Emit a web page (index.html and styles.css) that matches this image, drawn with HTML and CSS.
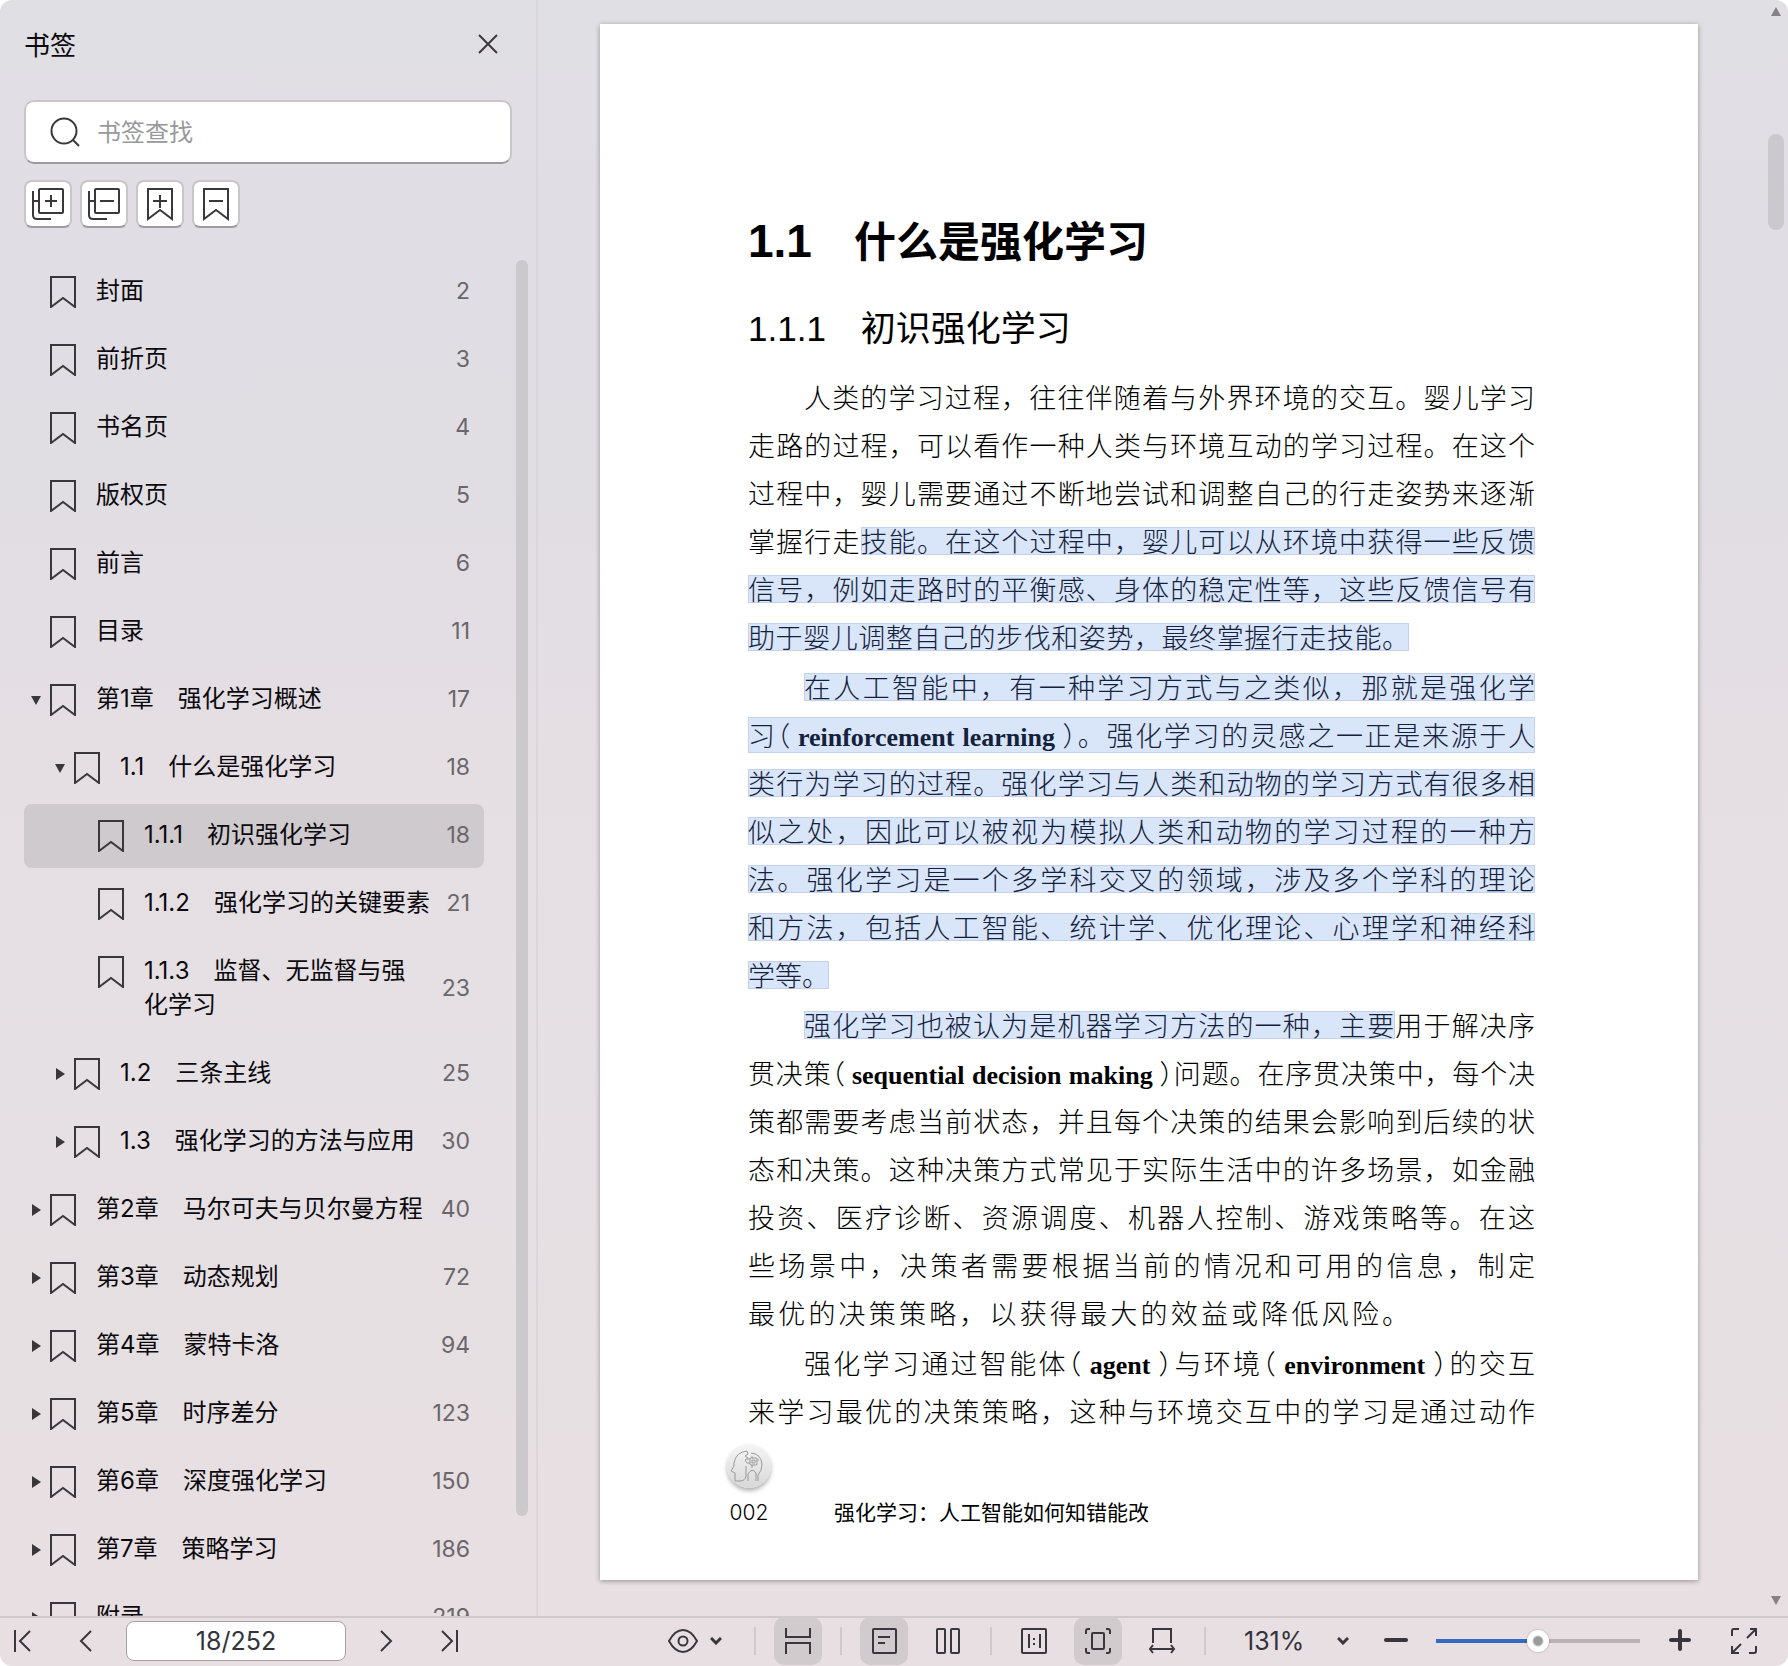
FILE: index.html
```html
<!DOCTYPE html>
<html lang="zh-CN">
<head>
  <meta charset="UTF-8">
  <meta name="viewport" content="width=device-width, initial-scale=1.0">
  <title>强化学习：人工智能如何知错能改</title>
  <link rel="stylesheet" href="styles.css">
</head>
<body>
  <!-- 公用图标 -->
  <svg class="defs" aria-hidden="true">
    <symbol id="i-mark" viewBox="0 0 26 32"><path d="M1 1H25V31L13 22L1 31Z"/></symbol>
    <symbol id="i-open" viewBox="0 0 12 12"><path d="M1 2H11L6 11Z"/></symbol>
    <symbol id="i-fold" viewBox="0 0 12 12"><path d="M2 0V12L11 6Z"/></symbol>
    <symbol id="i-chevron" viewBox="0 0 12 8"><path d="M1 1L6 6L11 1"/></symbol>
  </svg>

  <div class="app">
    <div class="main">
      <!-- 书签侧栏 -->
      <aside class="sidebar">
        <header class="sidebar-head">
          <h2>书签</h2>
          <button class="close-btn" aria-label="关闭">
            <svg width="20" height="20" viewBox="0 0 20 20"><path d="M1 1L19 19M19 1L1 19"/></svg>
          </button>
        </header>
        <label class="search">
          <svg width="32" height="32" viewBox="0 0 32 32"><circle cx="15" cy="15" r="12.500"/><path d="M24 24L30 30"/></svg>
          <input type="text" placeholder="书签查找" aria-label="书签查找">
        </label>
        <div class="mark-tools">
          <button aria-label="全部展开"><svg width="34" height="34" viewBox="0 0 34 34"><rect x="8" y="2" width="24" height="24" rx="1"/><path d="M20 8V20M14 14H26M2 4V28Q2 32 6 32H20M2 14H8"/></svg></button>
          <button aria-label="全部折叠"><svg width="34" height="34" viewBox="0 0 34 34"><rect x="8" y="2" width="24" height="24" rx="1"/><path d="M13 14H27M2 4V28Q2 32 6 32H20M2 14H8"/></svg></button>
          <button aria-label="添加书签"><svg width="34" height="34" viewBox="0 0 34 34"><path d="M5 2H29V32L17 23L5 32ZM17 8V21M10 14H24"/></svg></button>
          <button aria-label="删除书签"><svg width="34" height="34" viewBox="0 0 34 34"><path d="M5 2H29V32L17 23L5 32ZM10 14H24"/></svg></button>
        </div>
        <div class="tree-wrap">
          <nav class="tree">
            <a href="#"><i></i><svg class="mark"><use href="#i-mark"/></svg><span class="label">封面</span><span class="page-no">2</span></a>
            <a href="#"><i></i><svg class="mark"><use href="#i-mark"/></svg><span class="label">前折页</span><span class="page-no">3</span></a>
            <a href="#"><i></i><svg class="mark"><use href="#i-mark"/></svg><span class="label">书名页</span><span class="page-no">4</span></a>
            <a href="#"><i></i><svg class="mark"><use href="#i-mark"/></svg><span class="label">版权页</span><span class="page-no">5</span></a>
            <a href="#"><i></i><svg class="mark"><use href="#i-mark"/></svg><span class="label">前言</span><span class="page-no">6</span></a>
            <a href="#"><i></i><svg class="mark"><use href="#i-mark"/></svg><span class="label">目录</span><span class="page-no">11</span></a>
            <a href="#"><i><svg><use href="#i-open"/></svg></i><svg class="mark"><use href="#i-mark"/></svg><span class="label">第1章　强化学习概述</span><span class="page-no">17</span></a>
            <a href="#" class="level-2"><i><svg><use href="#i-open"/></svg></i><svg class="mark"><use href="#i-mark"/></svg><span class="label">1.1　什么是强化学习</span><span class="page-no">18</span></a>
            <a href="#" class="level-3 active"><i></i><svg class="mark"><use href="#i-mark"/></svg><span class="label">1.1.1　初识强化学习</span><span class="page-no">18</span></a>
            <a href="#" class="level-3"><i></i><svg class="mark"><use href="#i-mark"/></svg><span class="label">1.1.2　强化学习的关键要素</span><span class="page-no">21</span></a>
            <a href="#" class="level-3"><i></i><svg class="mark"><use href="#i-mark"/></svg><span class="label">1.1.3　监督、无监督与强<br>化学习</span><span class="page-no">23</span></a>
            <a href="#" class="level-2"><i><svg><use href="#i-fold"/></svg></i><svg class="mark"><use href="#i-mark"/></svg><span class="label">1.2　三条主线</span><span class="page-no">25</span></a>
            <a href="#" class="level-2"><i><svg><use href="#i-fold"/></svg></i><svg class="mark"><use href="#i-mark"/></svg><span class="label">1.3　强化学习的方法与应用</span><span class="page-no">30</span></a>
            <a href="#"><i><svg><use href="#i-fold"/></svg></i><svg class="mark"><use href="#i-mark"/></svg><span class="label">第2章　马尔可夫与贝尔曼方程</span><span class="page-no">40</span></a>
            <a href="#"><i><svg><use href="#i-fold"/></svg></i><svg class="mark"><use href="#i-mark"/></svg><span class="label">第3章　动态规划</span><span class="page-no">72</span></a>
            <a href="#"><i><svg><use href="#i-fold"/></svg></i><svg class="mark"><use href="#i-mark"/></svg><span class="label">第4章　蒙特卡洛</span><span class="page-no">94</span></a>
            <a href="#"><i><svg><use href="#i-fold"/></svg></i><svg class="mark"><use href="#i-mark"/></svg><span class="label">第5章　时序差分</span><span class="page-no">123</span></a>
            <a href="#"><i><svg><use href="#i-fold"/></svg></i><svg class="mark"><use href="#i-mark"/></svg><span class="label">第6章　深度强化学习</span><span class="page-no">150</span></a>
            <a href="#"><i><svg><use href="#i-fold"/></svg></i><svg class="mark"><use href="#i-mark"/></svg><span class="label">第7章　策略学习</span><span class="page-no">186</span></a>
            <a href="#"><i><svg><use href="#i-fold"/></svg></i><svg class="mark"><use href="#i-mark"/></svg><span class="label">附录</span><span class="page-no">219</span></a>
          </nav>
          <div class="tree-scroll"></div>
        </div>
      </aside>

      <!-- 文档阅读区 -->
      <main class="viewer">
        <article class="page">
          <h1><span class="num">1.1</span>　什么是强化学习</h1>
          <h2>1.1.1　初识强化学习</h2>
          <div class="text">
            <p>
              <span class="indent">人类的学习过程，往往伴随着与外界环境的交互。婴儿学习</span>
              <span>走路的过程，可以看作一种人类与环境互动的学习过程。在这个</span>
              <span>过程中，婴儿需要通过不断地尝试和调整自己的行走姿势来逐渐</span>
              <span>掌握行走<mark>技能。在这个过程中，婴儿可以从环境中获得一些反馈</mark></span>
              <span><mark>信号，例如走路时的平衡感、身体的稳定性等，这些反馈信号有</mark></span>
              <span class="short"><mark>助于婴儿调整自己的步伐和姿势，最终掌握行走技能。</mark></span>
            </p>
            <p>
              <span class="indent"><mark>在人工智能中，有一种学习方式与之类似，那就是强化学</mark></span>
              <span><mark class="tall">习<q>（</q><em>reinforcement learning</em><q>）</q>。强化学习的灵感之一正是来源于人</mark></span>
              <span><mark>类行为学习的过程。强化学习与人类和动物的学习方式有很多相</mark></span>
              <span><mark>似之处，因此可以被视为模拟人类和动物的学习过程的一种方</mark></span>
              <span><mark>法。强化学习是一个多学科交叉的领域，涉及多个学科的理论</mark></span>
              <span><mark>和方法，包括人工智能、统计学、优化理论、心理学和神经科</mark></span>
              <span class="last"><mark>学等。</mark></span>
            </p>
            <p>
              <span class="indent"><mark>强化学习也被认为是机器学习方法的一种，主要</mark>用于解决序</span>
              <span>贯决策<q>（</q><em>sequential decision making</em><q>）</q>问题。在序贯决策中，每个决</span>
              <span>策都需要考虑当前状态，并且每个决策的结果会影响到后续的状</span>
              <span>态和决策。这种决策方式常见于实际生活中的许多场景，如金融</span>
              <span>投资、医疗诊断、资源调度、机器人控制、游戏策略等。在这</span>
              <span>些场景中，决策者需要根据当前的情况和可用的信息，制定</span>
              <span class="short">最优的决策策略，以获得最大的效益或降低风险。</span>
            </p>
            <p>
              <span class="indent">强化学习通过智能体<q>（</q><em>agent</em><q>）</q>与环境<q>（</q><em>environment</em><q>）</q>的交互</span>
              <span>来学习最优的决策策略，这种与环境交互中的学习是通过动作</span>
            </p>
          </div>
          <footer class="page-foot">
            <div class="folio">
              <svg class="head-logo" width="44" height="44" viewBox="0 0 44 44">
                <path d="M8 37V29L4 27L7 22V19Q9 8 20 7L21 10L18 12L21 14L18 16L20 19M8 37H13Q18 37 19 32V22M24 9Q34 10 35 20Q35 27 31 31V37M21 37V30Q25 23 29 29V37"/>
                <rect x="23" y="14" width="7" height="7" rx="1"/><path d="M25 16H28V19H25ZM20 15H23M20 19H23M30 16H32M25 14V12M25 21V24"/>
              </svg>
              <span>002</span>
            </div>
            <span class="book-name">强化学习：人工智能如何知错能改</span>
          </footer>
        </article>
        <div class="view-scroll">
          <svg><use href="#i-open"/></svg>
          <div class="thumb"></div>
          <svg><use href="#i-open"/></svg>
        </div>
      </main>
    </div>

    <!-- 底部工具栏 -->
    <footer class="toolbar">
      <div class="pager">
        <button aria-label="首页"><svg width="20" height="24" viewBox="0 0 20 24"><path d="M3 1V23M18 2L8 12L18 22"/></svg></button>
        <button aria-label="上一页"><svg width="20" height="24" viewBox="0 0 20 24"><path d="M15 2L5 12L15 22"/></svg></button>
        <input type="text" value="18/252" aria-label="页码">
        <button aria-label="下一页"><svg width="20" height="24" viewBox="0 0 20 24"><path d="M5 2L15 12L5 22"/></svg></button>
        <button aria-label="末页"><svg width="20" height="24" viewBox="0 0 20 24"><path d="M2 2L12 12L2 22M17 1V23"/></svg></button>
      </div>
      <div class="view-tools">
        <button class="eye" aria-label="护眼模式">
          <svg width="30" height="24" viewBox="0 0 30 24"><path d="M1 12Q7 1 15 1Q23 1 29 12Q23 23 15 23Q7 23 1 12Z"/><circle cx="15" cy="12" r="4.500"/></svg>
          <svg class="chevron"><use href="#i-chevron"/></svg>
        </button>
        <span class="sep"></span>
        <button class="on" aria-label="连续阅读"><svg width="28" height="28" viewBox="0 0 28 28"><path d="M2 1V10H26V1M2 27V16H26V27"/></svg></button>
        <span class="sep"></span>
        <button class="on" aria-label="单页"><svg width="28" height="28" viewBox="0 0 28 28"><rect x="3" y="2" width="23" height="24" rx="1"/><path d="M8 10H20M8 16H15"/></svg></button>
        <button class="gap" aria-label="双页"><svg width="28" height="28" viewBox="0 0 28 28"><rect x="3" y="2" width="8" height="24" rx="1"/><rect x="17" y="2" width="8" height="24" rx="1"/></svg></button>
        <span class="sep"></span>
        <button aria-label="实际大小"><svg width="28" height="28" viewBox="0 0 28 28"><rect x="2" y="2" width="24" height="24" rx="1"/><path d="M9 7V21M20 7V21M14 11V13M14 16V18"/></svg></button>
        <button class="on gap" aria-label="适合页面"><svg width="28" height="28" viewBox="0 0 28 28"><rect x="8" y="6" width="12" height="16" rx="1"/><path d="M2 7V4Q2 2 4 2H6M22 2H24Q26 2 26 4V7M26 21V24Q26 26 24 26H22M6 26H4Q2 26 2 24V21"/></svg></button>
        <button class="gap" aria-label="适合宽度"><svg width="28" height="28" viewBox="0 0 28 28"><path d="M5 16V2H23V16M2 22H26M5 18L2 22L5 26M23 18L26 22L23 26"/></svg></button>
        <span class="sep"></span>
        <label class="zoom">
          <select aria-label="缩放比例"><option>131%</option></select>
          <svg class="chevron"><use href="#i-chevron"/></svg>
        </label>
        <button class="bold" aria-label="缩小"><svg width="26" height="26" viewBox="0 0 26 26"><path d="M3 12H23"/></svg></button>
        <input class="slider" type="range" min="0" max="100" value="50" aria-label="缩放">
        <button class="bold" aria-label="放大"><svg width="26" height="26" viewBox="0 0 26 26"><path d="M4 12H22M13 3V21"/></svg></button>
        <button class="full gap" aria-label="全屏"><svg width="28" height="28" viewBox="0 0 28 28"><path d="M2 9V4Q2 2 4 2H9M20 2H26V9M26 2L17 11M26 19V24Q26 26 24 26H19M9 26H2V19M2 26L11 17"/></svg></button>
      </div>
    </footer>
  </div>
</body>
</html>
```

FILE: styles.css
```css
* {
  box-sizing: border-box;
}
body {
  margin: 0;
  background: #fff;
  color: #0c0a0e;
  font-family: Inter, "Noto Sans CJK SC", sans-serif;
}
svg {
  display: block;
  flex: none;
  fill: none;
  stroke: #3a373c;
  stroke-width: 2;
}
.defs {
  position: absolute;
  width: 0;
  height: 0;
}
button {
  padding: 0;
  border: none;
  background: none;
  display: flex;
  align-items: center;
  justify-content: center;
}
.app {
  display: flex;
  flex-direction: column;
  height: 100vh;
  border-radius: 12px;
  overflow: hidden;
  background: linear-gradient(#e0dfe4, #e0dde3 28%, #e5dfe4 45%, #e5e0e4 65%, #e7dfe1 90%);
}
.main {
  flex: 1;
  min-height: 0;
  display: flex;
}

/* 侧栏 */
.sidebar {
  width: 538px;
  flex: none;
  display: flex;
  flex-direction: column;
  border-right: 2px solid #dad6db;
}
.sidebar-head {
  display: flex;
  align-items: center;
  justify-content: space-between;
  height: 87px;
  padding: 0 38px 0 24px;
}
.sidebar-head h2 {
  margin: 0;
  font-size: 26px;
  font-weight: 400;
}
.search {
  display: flex;
  align-items: center;
  height: 64px;
  margin: 13px 24px 16px;
  padding: 0 23px;
  background: #fff;
  border: 2px solid #c8c6cb;
  border-bottom-color: #9c9a9e;
  border-radius: 10px;
}
.search input {
  flex: 1;
  min-width: 0;
  margin-left: 16px;
  padding: 0;
  border: none;
  background: none;
  font: inherit;
  font-size: 24px;
}
.search input::placeholder {
  color: #9a989b;
}
.mark-tools {
  display: flex;
  gap: 8px;
  padding-left: 24px;
}
.mark-tools button {
  width: 48px;
  height: 48px;
  background: #fff;
  border: 2px solid #c8c6cb;
  border-bottom-color: #9c9a9e;
  border-radius: 8px;
}
.tree-wrap {
  flex: 1;
  min-height: 0;
  display: flex;
  margin-top: 32px;
}
.tree {
  width: 460px;
  margin: 0 32px 0 24px;
  overflow: hidden;
}
.tree a {
  display: flex;
  align-items: center;
  padding: 14px 14px 16px 0;
  margin-bottom: 4px;
  border-radius: 8px;
  color: inherit;
  text-decoration: none;
  font-size: 24px;
  line-height: 34px;
}
.tree .level-2 {
  padding-left: 24px;
}
.tree .level-3 {
  padding-left: 48px;
}
.tree .active {
  background: #cfcace;
}
.tree i {
  width: 26px;
  padding: 2px 0 0 6px;
}
.tree i svg {
  width: 12px;
  height: 12px;
  fill: #3a373c;
  stroke: none;
}
.tree .mark {
  width: 26px;
  height: 32px;
  margin: 2px 20px 0 0;
  align-self: flex-start;
}
.label {
  flex: 1;
  white-space: nowrap;
}
.page-no {
  font-size: 23px;
  color: #6a666b;
}
.tree-scroll {
  width: 12px;
  margin-bottom: 100px;
  border-radius: 6px;
  background: #ccc9cd;
}

/* 阅读区 */
.viewer {
  flex: 1;
  min-width: 0;
  display: flex;
  padding: 24px 0 36px 62px;
}
.page {
  flex: 1;
  min-width: 0;
  padding: 187px 163px 0 148px;
  background: #fff;
  box-shadow: 0 1px 5px rgba(0, 0, 0, .35);
  color: #000;
}
.page h1,
.page h2 {
  margin: 0;
  font-family: "Liberation Sans", "Noto Sans CJK SC", sans-serif;
}
.page h1 {
  height: 60px;
  font-size: 42px;
  line-height: 60px;
}
.page .num {
  font-size: 46px;
}
.page h2 {
  margin: 34px 0 20px;
  font-size: 35px;
  line-height: 48px;
  font-weight: 400;
}
.text {
  font-family: "Noto Sans CJK SC", sans-serif;
  font-size: 27px;
  font-weight: 300;
  line-height: 48px;
  color: #000;
}
.text p {
  margin: 0 0 2px;
}
.text p > span {
  display: block;
  height: 48px;
  white-space: nowrap;
  text-align: justify;
  text-align-last: justify;
}
.text .indent {
  padding-left: 56px;
}
.text .short {
  width: 84%;
}
.text p > .last {
  text-align-last: left;
}
.text mark {
  color: #14213c;
  background:
    linear-gradient(#d9e5f9, #d9e5f9) center / calc(100% - 2px) 26px no-repeat,
    linear-gradient(#c3d1ec, #c3d1ec) center / 100% 28px no-repeat;
}
.text mark.tall {
  background-size: calc(100% - 2px) 34px, 100% 36px;
}
.text q {
  quotes: none;
  font-feature-settings: "halt";
}
.text em {
  margin: 0 6px;
  font-family: "Liberation Serif", serif;
  font-size: 26px;
  font-style: normal;
  font-weight: 700;
}
.page-foot {
  display: flex;
  align-items: flex-end;
  margin: 9px 0 0 -21px;
  font-size: 21px;
  line-height: 32px;
}
.folio {
  width: 44px;
  margin-right: 63px;
  text-align: center;
  font-weight: 300;
}
.folio span {
  display: block;
  margin-top: 9px;
}
.head-logo {
  border-radius: 50%;
  background: linear-gradient(#f5f5f5, #d8d8d8);
  box-shadow: 0 3px 4px rgba(0, 0, 0, .3);
  stroke: #999;
  stroke-width: 1;
}
.view-scroll {
  display: flex;
  flex-direction: column;
  align-items: center;
  width: 28px;
  margin: -18px 0 -26px 62px;
  padding-left: 4px;
}
.view-scroll svg {
  width: 12px;
  height: 12px;
  fill: #858286;
  stroke: none;
}
.view-scroll svg:first-child {
  transform: rotate(180deg);
}
.view-scroll .thumb {
  width: 16px;
  height: 96px;
  margin: 116px 0 auto;
  border-radius: 8px;
  background: #cbc9ce;
}

/* 底部工具栏 */
.toolbar {
  flex: none;
  display: flex;
  align-items: center;
  justify-content: space-between;
  height: 50px;
  padding: 0 20px 2px 6px;
  border-top: 2px solid #d0c9cc;
}
.pager {
  display: flex;
  align-items: center;
  gap: 32px;
}
.pager button {
  width: 32px;
  height: 48px;
}
.pager input {
  width: 220px;
  height: 40px;
  margin: 0 -8px;
  padding: 0;
  border: 1px solid #a5a0a3;
  border-radius: 8px;
  background: #fff;
  color: #33333d;
  font-family: inherit;
  font-size: 25px;
  text-align: center;
}
.view-tools {
  display: flex;
  align-items: center;
}
.view-tools button {
  width: 48px;
  height: 48px;
  border-radius: 10px;
}
.view-tools .on {
  background: #d1cbce;
}
.view-tools .gap {
  margin-left: 16px;
}
.view-tools .eye {
  width: 54px;
  margin-right: 14px;
  justify-content: space-between;
}
.chevron {
  width: 12px;
  height: 8px;
  stroke-width: 3;
}
.sep {
  width: 2px;
  height: 28px;
  margin: 0 18px;
  background: #d0c9cc;
}
.zoom {
  display: flex;
  align-items: center;
  justify-content: space-between;
  width: 105px;
  margin: 0 23px 0 20px;
}
.zoom select {
  appearance: none;
  padding: 0;
  border: none;
  background: none;
  color: #33333d;
  font-family: inherit;
  font-size: 25px;
}
.view-tools .bold svg {
  stroke-width: 4;
  stroke-linecap: round;
}
.slider {
  appearance: none;
  width: 204px;
  height: 22px;
  margin: 0 16px;
  background: linear-gradient(90deg, #3569c4 50%, #b9b3b6 50%) center / 100% 4px no-repeat;
}
.slider::-webkit-slider-thumb {
  appearance: none;
  width: 22px;
  height: 22px;
  border-radius: 50%;
  background: radial-gradient(circle, #9a9a9a 4px, #fff 6px);
  box-shadow: 0 0 2px rgba(0, 0, 0, .4);
}
```
